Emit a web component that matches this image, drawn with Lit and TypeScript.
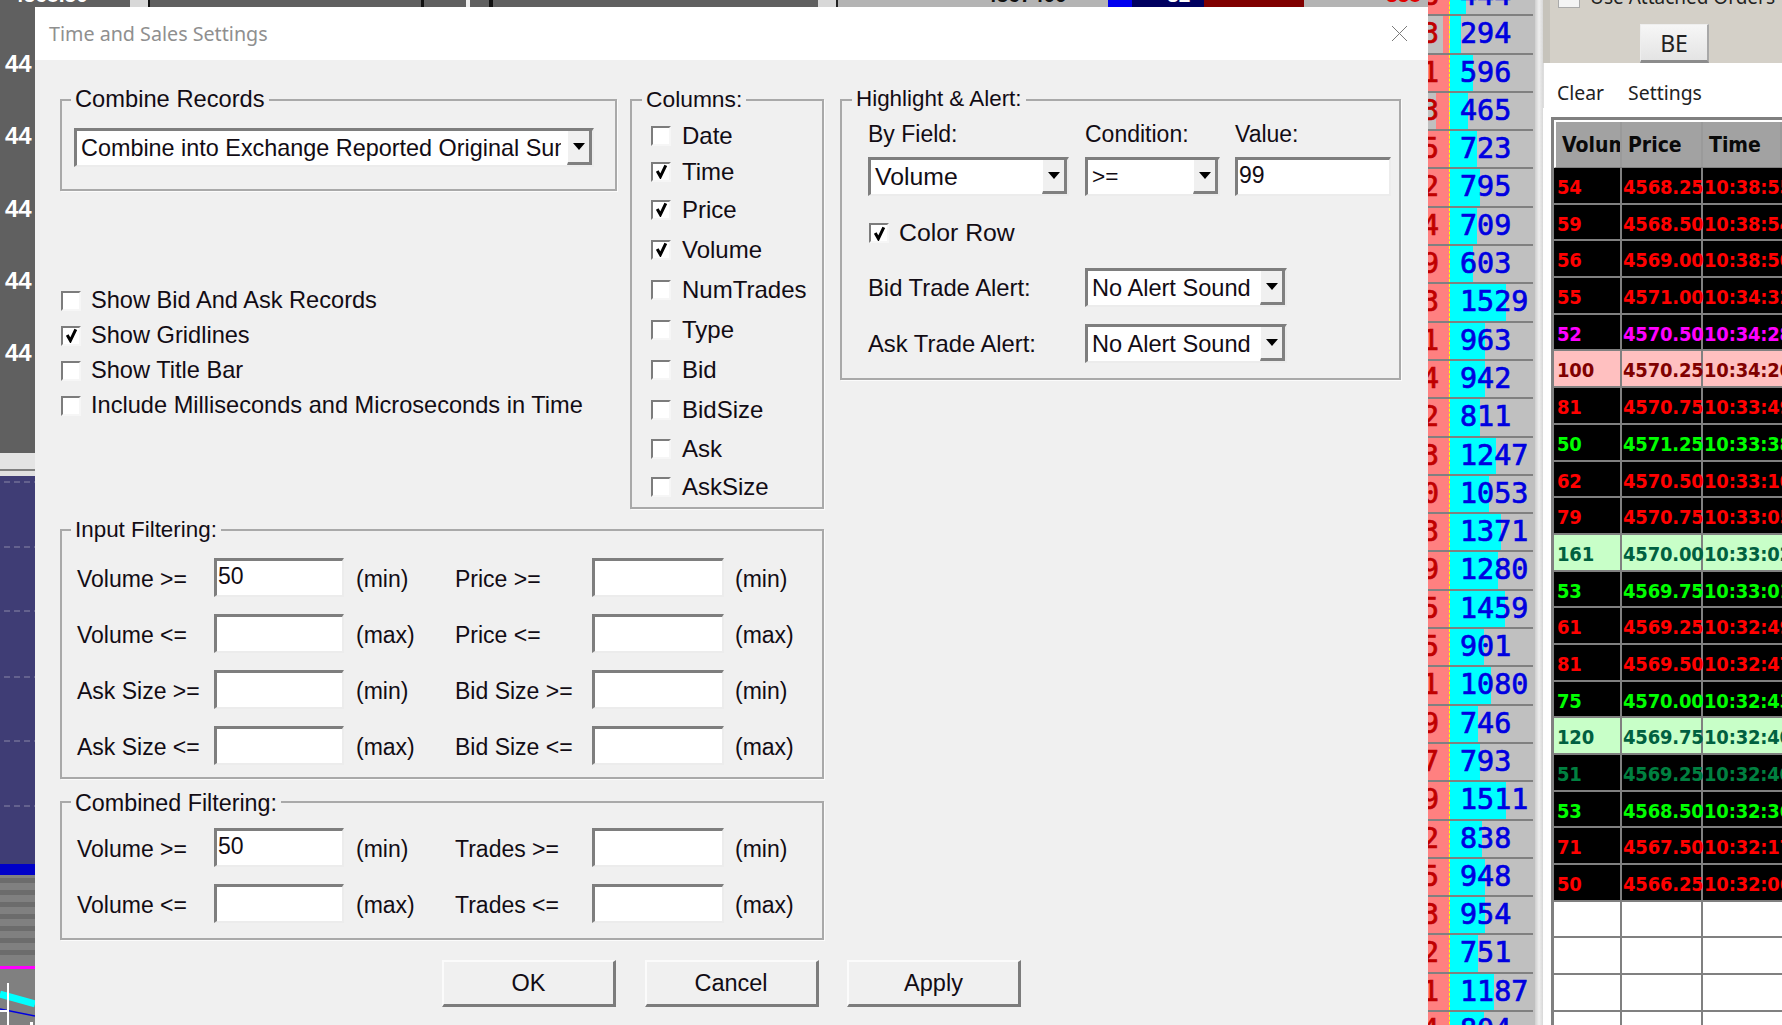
import { LitElement, html, css, svg } from "lit";
import { customElement } from "lit/decorators.js";

const ladder: [string, string, number, number][] = [
  ["8", "444", 1467, 1428],
  ["3", "294", 1462, 1443],
  ["1", "596", 1474, 1428],
  ["3", "465", 1469, 1436],
  ["5", "723", 1478, 1428],
  ["2", "795", 1481, 1428],
  ["4", "709", 1478, 1428],
  ["9", "603", 1474, 1428],
  ["3", "1529", 1507, 1428],
  ["1", "963", 1486, 1428],
  ["4", "942", 1486, 1428],
  ["2", "811", 1481, 1428],
  ["3", "1247", 1497, 1428],
  ["0", "1053", 1490, 1428],
  ["3", "1371", 1502, 1428],
  ["9", "1280", 1499, 1428],
  ["5", "1459", 1506, 1428],
  ["5", "901", 1485, 1428],
  ["1", "1080", 1492, 1428],
  ["9", "746", 1479, 1428],
  ["7", "793", 1481, 1428],
  ["9", "1511", 1507, 1428],
  ["2", "838", 1483, 1428],
  ["5", "948", 1486, 1428],
  ["3", "954", 1486, 1428],
  ["2", "751", 1479, 1428],
  ["1", "1187", 1495, 1428],
  ["4", "804", 1485, 1428],
];

const trades: [string, string, string, string][] = [
  ["54", "4568.25", "10:38:55", "r"],
  ["59", "4568.50", "10:38:54", "r"],
  ["56", "4569.00", "10:38:50", "r"],
  ["55", "4571.00", "10:34:32", "r"],
  ["52", "4570.50", "10:34:28", "m"],
  ["100", "4570.25", "10:34:20", "pink"],
  ["81", "4570.75", "10:33:49", "r"],
  ["50", "4571.25", "10:33:38", "g"],
  ["62", "4570.50", "10:33:10", "r"],
  ["79", "4570.75", "10:33:05", "r"],
  ["161", "4570.00", "10:33:02", "lime"],
  ["53", "4569.75", "10:33:01", "g"],
  ["61", "4569.25", "10:32:49", "r"],
  ["81", "4569.50", "10:32:47", "r"],
  ["75", "4570.00", "10:32:43", "g"],
  ["120", "4569.75", "10:32:40", "lime"],
  ["51", "4569.25", "10:32:40", "d"],
  ["53", "4568.50", "10:32:36", "g"],
  ["71", "4567.50", "10:32:17", "r"],
  ["50", "4566.25", "10:32:06", "r"],
  ["", "", "", "e"],
  ["", "", "", "e"],
  ["", "", "", "e"],
  ["", "", "", "e"],
];

const tick = html`<svg class="tick" viewBox="0 0 13 15"><path d="M2.2 7 L5.4 12.6 L10.8 1.4" stroke="#000" stroke-width="3" fill="none"/></svg>`;
const cb = (label: string, on = false) =>
  html`<label class="cb"><span class="box">${on ? tick : ""}</span><span>${label}</span></label>`;

const combo = (cls: string, text: string) =>
  html`<div class="combo ${cls}"><span class="ctext">${text}</span><span class="arrow"><i></i></span></div>`;

const field = (v = "") => html`<div class="input">${v}</div>`;

const filterRow = (a: string, av: string, au: string, b: string, bu: string) => html`
  <span class="fl">${a}</span>${field(av)}<span class="fu">${au}</span>
  <span class="fl">${b}</span>${field()}<span class="fu u2">${bu}</span>`;

const dashes = [29, 94, 158, 224, 288, 353];
const bands = [0, 1, 2, 3, 4, 5, 6];

@customElement("app-root")
export class AppRoot extends LitElement {
  static styles = css`
    :host { display: block; width: 1782px; height: 1025px; overflow: hidden; font-family: "Liberation Sans", Arial, sans-serif; background: #606060; }
    .page { display: flex; width: 1782px; height: 1025px; overflow: hidden; }
    .main { width: 1428px; height: 1025px; display: flex; flex-direction: column; flex: none; }
    .band { height: 7px; flex: none; display: flex; overflow: hidden; background: #606060; font-weight: 700; font-size: 21px; line-height: 20px; }
    .seg { height: 7px; flex: none; overflow: hidden; position: relative; }
    .seg span { display: block; margin-top: -15px; white-space: nowrap; }
    .s1 { width: 130px; color: #fff; padding-left: 12px; box-sizing: border-box; }
    .s2 { width: 18px; background: #d8d8d8; }
    .s3 { width: 273px; border-left: 2px solid #111; box-sizing: border-box; }
    .mk { width: 3px; background: #111; margin-right: 42px; }
    .mw { width: 4px; background: #eee; margin-right: 19px; }
    .mk2 { width: 4px; background: #111; margin-right: 325px; }
    .s4 { width: 20px; background: #d8d8d8; border-right: 2px solid #222; box-sizing: border-box; }
    .s5 { width: 270px; background: #b4b4b4; color: #111; padding-left: 147px; box-sizing: border-box; }
    .s6 { width: 24px; background: #0000f0; }
    .s7 { width: 72px; background: #000060; color: #fff; padding-left: 28px; box-sizing: border-box; }
    .s8 { width: 100px; background: #800000; }
    .s9 { flex: 1; background: #b4b4b4; color: #e00000; padding-left: 82px; box-sizing: border-box; }
    .lower { flex: 1; display: flex; min-height: 0; }
    .strip { width: 35px; flex: none; display: flex; flex-direction: column; overflow: hidden; }
    .scale { height: 446px; flex: none; padding-top: 21px; box-sizing: border-box; }
    .sc { height: 72.25px; display: flex; align-items: center; padding-left: 5px; color: #fff; font-weight: 700; font-size: 24px; line-height: 72px; white-space: nowrap; }
    .chart { display: block; width: 35px; height: 572px; }

    .dialog { width: 1393px; flex: none; background: #f0f0f0; display: flex; flex-direction: column; }
    .title { height: 53px; flex: none; background: #fff; display: flex; align-items: center; justify-content: space-between; padding: 0 20px 0 14px; font-family: "Noto Sans", sans-serif; font-size: 19.7px; color: #8f8f8f; }
    .x { width: 17px; height: 17px; display: block; }
    .body { flex: 1; display: flex; padding: 39px 0 0 25px; color: #120c14; font-size: 23px; gap: 16px; }
    .leftsec { width: 764px; flex: none; display: flex; flex-direction: column; }
    .toprow { display: flex; gap: 13px; height: 409px; }
    .col1 { width: 557px; }
    .group { position: relative; box-sizing: border-box; border: 2px solid #a9a9a9; box-shadow: 1px 1px 0 #fbfbfb; }
    .legend { position: absolute; left: 9px; top: -15px; background: #f0f0f0; padding: 0 4px; line-height: 26px; white-space: nowrap; font-size: 22.4px; }
    .lg-rec { font-size: 23.7px; }
    .lg-col { font-size: 22.8px; left: 10px; }
    .lg-inp { top: -14px; }
    .lg-cmb { font-size: 23.3px; top: -13px; }
    .lg-hi { left: 10px; }
    .combine { height: 92px; padding: 27px 0 0 12px; }
    .combo { display: flex; box-sizing: border-box; background: #fff; border: 3px solid #7e7e7e; border-right: 2px solid #ececec; border-bottom: 2px solid #ececec; align-items: stretch; overflow: hidden; }
    .ctext { flex: 1; min-width: 0; overflow: hidden; white-space: nowrap; padding-left: 4px; display: flex; align-items: center; font-size: 23.6px; }
    .arrow { width: 25px; flex: none; background: #f0f0f0; border-right: 3px solid #808080; border-bottom: 3px solid #808080; border-left: 1px solid #fff; box-sizing: border-box; display: flex; align-items: center; justify-content: center; }
    .arrow i { width: 0; height: 0; border-left: 6px solid transparent; border-right: 6px solid transparent; border-top: 7px solid #000; }
    .c-rec { width: 520px; height: 39px; }
    .c-rec .ctext { font-size: 23.4px; margin-right: 6px; }
    .checks { margin-top: 92px; display: grid; grid-auto-rows: 35px; align-items: center; padding-left: 1px; font-size: 23.6px; }
    .cb { display: flex; align-items: center; gap: 10px; white-space: nowrap; }
    .box { width: 20px; height: 20px; box-sizing: border-box; flex: none; background: #fff; border: 2px solid #7c7c7c; border-right: 2px solid #f6f6f6; border-bottom: 2px solid #f6f6f6; display: flex; align-items: center; justify-content: center; }
    .tick { width: 13px; height: 15px; display: block; }
    .columns { width: 194px; height: 410px; padding: 17px 0 0 19px; display: grid; align-items: center; grid-template-rows: 35px 37px 39px 41px 40px 40px 40px 39px 39px 38px; font-size: 24px; }
    .columns .cb { gap: 11px; }
    .high { width: 561px; height: 281px; padding: 15px 0 0 26px; }
    .hgrid { display: grid; grid-template-columns: 217px 150px 156px; align-items: start; }
    .hl { height: 36px; line-height: 36px; margin-bottom: 5px; }
    .c-vol { width: 201px; height: 39px; }
    .c-vol .ctext { font-size: 24.8px; }
    .c-cond { width: 135px; height: 39px; }
    .c-cond .ctext { font-size: 22.6px; }
    .high .input { width: 156px; height: 39px; }
    .colorrow { margin: 18px 0 0 1px; height: 38px; display: flex; align-items: center; font-size: 24.8px; }
    .alert { display: grid; grid-template-columns: 217px 202px; align-items: center; height: 39px; font-size: 23.8px; }
    .a1 { margin-top: 16px; }
    .a2 { margin-top: 17px; }
    .c-alert { width: 202px; height: 39px; }
    .input { box-sizing: border-box; background: #fff; border: 3px solid #7e7e7e; border-right: 2px solid #ececec; border-bottom: 2px solid #ececec; padding-left: 1px; font-size: 23px; line-height: 31px; }
    .filt { margin-top: 21px; height: 250px; padding: 27px 0 0 15px; }
    .filt2 { margin-top: 22px; height: 139px; padding-top: 25px; }
    .fgrid { display: grid; grid-template-columns: 137px 130px 111px 137px 132px auto; grid-auto-rows: 39px; row-gap: 17px; align-items: center; font-size: 23px; }
    .fgrid .input { height: 39px; }
    .fu { padding: 3px 0 0 12px; }
    .u2 { padding-left: 11px; }
    .fl { white-space: nowrap; padding-top: 3px; }
    .buttons { display: flex; gap: 28.5px; margin: 20px 0 0 382px; }
    .btn { width: 174px; height: 47px; flex: none; box-sizing: border-box; background: #f0f0f0; border: 2px solid #fbfbfb; border-right: 3px solid #7c7c7c; border-bottom: 3px solid #7c7c7c; display: flex; align-items: center; justify-content: center; font-size: 23.5px; }

    .ladder { width: 107px; flex: none; background: #c0c0c0; overflow: hidden; font-family: "DejaVu Sans Mono", monospace; font-weight: 400; font-size: 28.4px; -webkit-text-stroke: 0.7px currentColor; }
    .lrows { margin-top: -22px; }
    .lr { height: 38.3px; box-sizing: border-box; border-bottom: 2px solid #808080; display: flex; line-height: 36px; width: 105px; }
    .lb { width: 22px; flex: none; overflow: hidden; display: flex; justify-content: flex-end; padding-right: 10px; box-sizing: border-box; color: #c00000; border-right: 1px dashed #ffff00; }
    .la { flex: 1; padding-left: 10px; color: #0000e0; }
    .sep { width: 8px; flex: none; background: linear-gradient(90deg, #cfcfcf, #efefef 50%, #d8d8d8); }
    .right { flex: 1; display: flex; flex-direction: column; min-width: 0; overflow: hidden; background: #fff; }
    .rtop { height: 63px; flex: none; background: #d4d0c8; box-sizing: border-box; padding-left: 8px; border-left: 7px solid #c6c3bb; font-family: "Noto Sans", sans-serif; color: #222; font-size: 19px; }
    .use { display: flex; align-items: center; gap: 10px; height: 23px; margin-top: -15px; white-space: nowrap; }
    .ubox { width: 22px; height: 23px; flex: none; background: #f4f4f4; border: 1px solid #aaa; box-sizing: border-box; }
    .be { margin: 16px 0 0 82px; width: 69px; height: 39px; box-sizing: border-box; background: linear-gradient(#f6f6f6, #e4e4e4); border: 1px solid #eee; border-bottom: 3px solid #8c8c8c; border-right: 2px solid #a8a8a8; display: flex; align-items: center; justify-content: center; font-size: 23px; color: #222; }
    .menu { height: 45px; flex: none; box-sizing: border-box; display: flex; gap: 24px; align-items: center; padding: 13px 0 0 13px; font-family: "Noto Sans", sans-serif; font-size: 19.4px; color: #222; border-left: 1px solid #ddd; }
    .tbl { margin: 9px 0 0 8px; border-top: 3px solid #808080; border-left: 3px solid #808080; font-family: "DejaVu Sans", sans-serif; font-stretch: condensed; font-weight: 700; font-size: 20px; letter-spacing: -0.2px; flex: none; }
    .th { height: 48px; box-sizing: border-box; display: grid; grid-template-columns: 66px 81px 1fr; background: #a2a2a2; color: #0a0a0a; border-top: 2px solid #fff; border-left: 2px solid #fff; border-bottom: 1px solid #808080; }
    .th span { display: flex; align-items: center; padding-left: 6px; border-right: 2px solid #9a9a9a; overflow: hidden; white-space: nowrap; font-size: 21px; letter-spacing: 0; }
    .tr { height: 36.7px; box-sizing: border-box; display: grid; grid-template-columns: 68px 81px 1fr; border-bottom: 2px solid #808080; }
    .tr span { display: flex; align-items: center; padding: 2px 0 0 1px; border-right: 2px solid #808080; white-space: nowrap; box-sizing: border-box; min-width: 0; line-height: 34px; }
    .tr span:first-child { padding-left: 3px; }
    .tr span:nth-child(2) { padding-left: 1px; }
    .tr span:last-child { border-right: 0; }
    .r { background: #000; color: #ff0000; }
    .m { background: #000; color: #ff00ff; }
    .g { background: #000; color: #00ff00; }
    .d { background: #000; color: #008040; }
    .pink { background: #ffc0c0; color: #800000; }
    .lime { background: #c8ffc8; color: #006040; }
    .e { background: #fff; }
  `;

  render() {
    return html`<div class="page">
      <div class="main">
        <div class="band">
          <div class="seg s1"><span>4568.50</span></div>
          <div class="seg s2"></div>
          <div class="seg s3"></div>
          <div class="seg mk"></div>
          <div class="seg mw"></div>
          <div class="seg mk2"></div>
          <div class="seg s4"></div>
          <div class="seg s5"><span>4567400</span></div>
          <div class="seg s6"></div>
          <div class="seg s7"><span>-32</span></div>
          <div class="seg s8"></div>
          <div class="seg s9"><span>358</span></div>
        </div>
        <div class="lower">
          <div class="strip">
            <div class="scale">
              ${[0, 1, 2, 3, 4].map(() => html`<div class="sc">44</div>`)}
            </div>
            <svg class="chart" viewBox="0 0 35 572">
              <rect width="35" height="572" fill="#808080"/>
              <rect y="0" width="35" height="16" fill="#e4e4e4"/>
              <rect y="16" width="35" height="2" fill="#808080"/>
              <rect y="18" width="35" height="5" fill="#e0e0e0"/>
              <rect y="23" width="35" height="388" fill="#3f3d75"/>
              ${dashes.map((y) => svg`<line x1="4" x2="35" y1=${y} y2=${y} stroke="#8a88a8" stroke-width="1" stroke-dasharray="6 4"/>`)}
              <rect y="411" width="35" height="11" fill="#0000c8"/>
              ${bands.map((i) => svg`<rect y=${425 + i * 12} width="35" height="5" fill="#6c6c6c"/>`)}
              <rect y="513" width="35" height="3" fill="#ff00ff"/>
              <path d="M0 541 L35 551" stroke="#00ffff" stroke-width="7" fill="none"/>
              <path d="M0 556 L35 563" stroke="#0000e0" stroke-width="1.5" fill="none"/>
              <rect x="7" y="530" width="2" height="42" fill="#fff"/>
              <rect x="0" y="557" width="9" height="2" fill="#fff"/>
              <rect x="30" y="569" width="3" height="3" fill="#fff"/>
            </svg>
          </div>
          <div class="dialog">
            <div class="title">
              <span>Time and Sales Settings</span>
              <svg class="x" viewBox="0 0 17 17"><path d="M1 1 L16 16 M16 1 L1 16" stroke="#7a7a7a" stroke-width="1" fill="none"/></svg>
            </div>
            <div class="body">
              <div class="leftsec">
                <div class="toprow">
                  <div class="col1">
                    <div class="group combine">
                      <span class="legend lg-rec">Combine Records</span>
                      ${combo("c-rec", "Combine into Exchange Reported Original Summary")}
                    </div>
                    <div class="checks">
                      ${cb("Show Bid And Ask Records")}
                      ${cb("Show Gridlines", true)}
                      ${cb("Show Title Bar")}
                      ${cb("Include Milliseconds and Microseconds in Time")}
                    </div>
                  </div>
                  <div class="group columns">
                    <span class="legend lg-col">Columns:</span>
                    ${cb("Date")}${cb("Time", true)}${cb("Price", true)}${cb("Volume", true)}${cb("NumTrades")}
                    ${cb("Type")}${cb("Bid")}${cb("BidSize")}${cb("Ask")}${cb("AskSize")}
                  </div>
                </div>
                <div class="group filt">
                  <span class="legend lg-inp">Input Filtering:</span>
                  <div class="fgrid">
                    ${filterRow("Volume >=", "50", "(min)", "Price >=", "(min)")}
                    ${filterRow("Volume <=", "", "(max)", "Price <=", "(max)")}
                    ${filterRow("Ask Size >=", "", "(min)", "Bid Size >=", "(min)")}
                    ${filterRow("Ask Size <=", "", "(max)", "Bid Size <=", "(max)")}
                  </div>
                </div>
                <div class="group filt filt2">
                  <span class="legend lg-cmb">Combined Filtering:</span>
                  <div class="fgrid">
                    ${filterRow("Volume >=", "50", "(min)", "Trades >=", "(min)")}
                    ${filterRow("Volume <=", "", "(max)", "Trades <=", "(max)")}
                  </div>
                </div>
                <div class="buttons">
                  <div class="btn">OK</div><div class="btn">Cancel</div><div class="btn">Apply</div>
                </div>
              </div>
              <div class="group high">
                <span class="legend lg-hi">Highlight &amp; Alert:</span>
                <div class="hgrid">
                  <span class="hl">By Field:</span><span class="hl">Condition:</span><span class="hl">Value:</span>
                  ${combo("c-vol", "Volume")}${combo("c-cond", ">=")}${field("99")}
                </div>
                <div class="colorrow">${cb("Color Row", true)}</div>
                <div class="alert a1"><span>Bid Trade Alert:</span>${combo("c-alert", "No Alert Sound")}</div>
                <div class="alert a2"><span>Ask Trade Alert:</span>${combo("c-alert", "No Alert Sound")}</div>
              </div>
            </div>
          </div>
        </div>
      </div>
      <div class="ladder">
        <div class="lrows">
          ${ladder.map(([b, a, cy, gr]) => html`<div class="lr">
            <div class="lb" style="background:linear-gradient(90deg,#c0c0c0 ${gr - 1428}px,#ff8080 ${gr - 1428}px)">${b}</div>
            <div class="la" style="background:linear-gradient(90deg,#00ffff ${cy - 1451}px,transparent ${cy - 1451}px)">${a}</div>
          </div>`)}
        </div>
      </div>
      <div class="sep"></div>
      <div class="right">
        <div class="rtop">
          <div class="use"><span class="ubox"></span><span>Use Attached Orders</span></div>
          <div class="be">BE</div>
        </div>
        <div class="menu"><span>Clear</span><span>Settings</span></div>
        <div class="tbl">
          <div class="th"><span>Volume</span><span>Price</span><span>Time</span></div>
          ${trades.map(([v, p, t, c]) => html`<div class="tr ${c}"><span>${v}</span><span>${p}</span><span>${t}</span></div>`)}
        </div>
      </div>
    </div>`;
  }
}
